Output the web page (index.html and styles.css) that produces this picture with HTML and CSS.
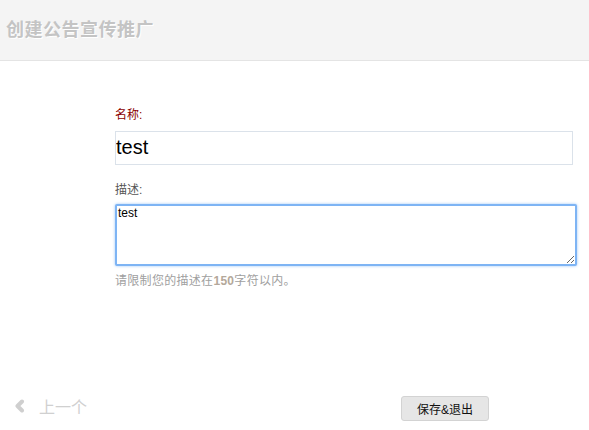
FILE: index.html
```html
<!DOCTYPE html>
<html lang="zh">
<head>
    <meta charset="UTF-8">
    <title>创建公告宣传推广</title>
    <link rel="stylesheet" href="styles.css">
</head>
<body>
    <div class="cabecera">
        <h1 class="titulo">创建公告宣传推广</h1>
    </div>

    <div class="formulario">
        <label class="etiqueta etiqueta-requerida">名称:</label>
        <input class="campo" type="text" value="test">

        <label class="etiqueta">描述:</label>
        <textarea class="area">test</textarea>
        <p class="ayuda">请限制您的描述在<b>150</b>字符以内。</p>
    </div>

    <div class="pie">
        <a class="anterior">
            <svg class="flecha" width="11" height="14" viewBox="0 0 11 14">
                <path d="M8 2.5 L3.5 7 L8 11.5" fill="none" stroke="#cfcfcf" stroke-width="4" stroke-linecap="round" stroke-linejoin="round"/>
            </svg>
            <span>上一个</span>
        </a>
        <button class="boton">保存&amp;退出</button>
    </div>
</body>
</html>
```

FILE: styles.css
```css
* {
    margin: 0; padding: 0; box-sizing: border-box;
}

body {
    font-family: "Liberation Sans", "Noto Sans CJK SC", sans-serif;
    background: #fff;
    color: #333;
}

.cabecera {
    height: 61px;
    background: #f4f4f4;
    border-bottom: 1px solid #e4e4e4;
    display: flex; align-items: center;
    padding-left: 6px;
}

.titulo {
    font-size: 18px; font-weight: bold;
    letter-spacing: 0.5px;
    color: #c4c4c4;
    text-shadow: 1px 1px 0 #fff;
    margin-top: -5px;
}

.formulario {
    padding: 46px 0 0 115px;
    display: flex; flex-direction: column; align-items: flex-start;
}

.etiqueta {
    font-size: 12px; line-height: 16px;
    color: #555;
}
.etiqueta-requerida { color: #8b0000; }

.campo {
    margin-top: 8px;
    width: 458px; height: 34px;
    border: 1px solid #dbe2ea;
    padding: 0 0 2px 0;
    font-family: inherit;
    font-size: 20px; color: #000;
    outline: none;
    margin-bottom: 17px;
}

.area {
    margin-top: 6px;
    width: 462px; height: 62px;
    border: 2px solid #7eb4f4;
    border-radius: 2px;
    box-shadow: 0 0 3px #9cc6f7;
    padding: 0 1px;
    font-family: inherit;
    font-size: 12px; color: #000;
    outline: none;
}

.ayuda {
    margin-top: 7px;
    font-size: 12px; line-height: 16px;
    letter-spacing: 0.3px;
    color: #a0a0a0;
}
.ayuda b { color: #b4a89a; }

.pie {
    margin-top: 101px;
    display: grid; grid-template-columns: 401px auto;
    align-items: center;
}

.anterior {
    display: flex; align-items: center; gap: 14px;
    padding-left: 14px;
    font-size: 16px; color: #d0d0d0;
}
.flecha { display: block; }

.boton {
    justify-self: start;
    width: 88px; height: 25px;
    background: #e6e6e6;
    border: 1px solid #d3d3d3;
    border-radius: 3px;
    font-family: inherit;
    font-size: 12px; color: #111;
    margin-top: 6px;
}
```
